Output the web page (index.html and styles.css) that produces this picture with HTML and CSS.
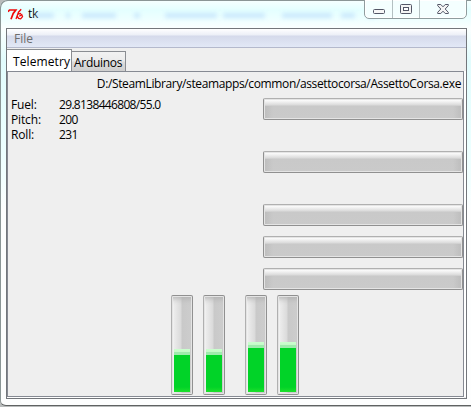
FILE: index.html
```html
<!DOCTYPE html>
<html lang="en">
<head>
<meta charset="utf-8">
<title>tk</title>
<link rel="stylesheet" href="styles.css">
</head>
<body>
<div class="window">
  <header class="titlebar">
    <div class="ghost" aria-hidden="true"><i class="g1"></i><i class="g2"></i><i class="g3"></i><i class="g4"></i><i class="g5"></i><i class="g6"></i><i class="g7"></i><i class="g8"></i><i class="g9"></i></div>
    <svg class="logo" width="16" height="14" viewBox="0 0 16 14" fill="none" stroke="#f00808" stroke-width="1.7"><path d="M0 3.8 1.5 2H7.8L5.2 5.5 3 11.2"/><path d="M13.2 1.2 10.5 4.2 8 11M10 6.2l3-.9M9 7.6 10.5 10.4l2.2.4 1.8-2.2-.8-2-2.4 1.6" stroke-width="1.3"/></svg>
    <span class="title">tk</span>
    <div class="controls">
      <span class="min"><svg width="12" height="5"><rect x=".5" y=".5" width="11" height="4" rx="1" fill="#f7f7f7" stroke="#535666"/></svg></span>
      <span class="max"><svg width="12" height="10"><rect x=".5" y=".5" width="11" height="9" rx="1" fill="#f4f4f4" stroke="#535666"/><rect x="3.5" y="3.5" width="5" height="3" fill="#fff" stroke="#535666"/></svg></span>
      <span class="close"><svg width="12" height="10" viewBox="0 0 12 10"><path d="M.7.5h3.1L6 2.8 8.2.5h3.1v1.2L8.2 5l3.1 3.3v1.2H8.2L6 7.2 3.8 9.5H.7V8.3L3.8 5 .7 1.7z" fill="#f4f4f4" stroke="#535666"/></svg></span>
    </div>
  </header>
  <main class="client">
    <nav class="menu"><span>File</span></nav>
    <div class="tabs"><span class="tab active">Telemetry</span><span class="tab">Arduinos</span></div>
    <section class="panel">
      <p class="path">D:/SteamLibrary/steamapps/common/assettocorsa/AssettoCorsa.exe</p>
      <div class="readings">
        <dl class="values">
          <dt>Fuel:</dt><dd>29.8138446808/55.0</dd>
          <dt>Pitch:</dt><dd>200</dd>
          <dt>Roll:</dt><dd>231</dd>
        </dl>
        <div class="bars">
          <div class="bar wide"></div><div class="bar wide"></div><div class="bar"></div><div class="bar"></div><div class="bar"></div>
        </div>
      </div>
      <div class="gauges">
        <div class="gauge"><div class="fill" style="height:43px"></div></div>
        <div class="gauge pair-end"><div class="fill" style="height:43px"></div></div>
        <div class="gauge"><div class="fill" style="height:50px"></div></div>
        <div class="gauge"><div class="fill" style="height:50px"></div></div>
      </div>
    </section>
  </main>
</div>
</body>
</html>
```
FILE: styles.css
```css
* { box-sizing: border-box; }
body {
  margin: 0;
  width: 471px;
  height: 407px;
  overflow: hidden;
  background: #b9bcbc;
  font: 12px/15px "Open Sans", "Noto Sans", sans-serif;
  color: #000;
}
p, dl, dd { margin: 0; }
span, p, dt, dd { white-space: nowrap; }
.window {
  width: 473px;
  height: 406px;
  padding: 0 7px 0 6px;
  border-bottom: 1px solid #5f6262;
  border-radius: 7px 0 0 6px;
  background: linear-gradient(#f7ffff 0, #e4ffff 10px, #efffff 20px, #fbffff 28px, #e2fcfd 60px, #eaffff 130px, #f2ffff 180px, #fdfefe 210px);
  box-shadow: inset 1px 1px #8b9696;
}
.titlebar {
  position: relative;
  display: flex;
  height: 28px;
}
.logo { margin: 8px 0 0 2px; }
.title { margin: 6px 0 0 4px; letter-spacing: -.2px; }
.ghost i {
  position: absolute;
  top: 13px;
  height: 5px;
  background: #acd3fa;
  opacity: .5;
  filter: blur(2px);
}
.g1 { left: 28px; width: 20px; }
.g2 { left: 60px; width: 4px; }
.g3 { left: 76px; width: 34px; }
.g4 { left: 128px; width: 6px; }
.g5 { left: 159px; width: 52px; }
.g6 { left: 217px; width: 42px; }
.g7 { left: 276px; width: 50px; }
.g8 { left: 335px; width: 14px; }
.g9 { left: 362px; width: 7px; }
.controls {
  position: absolute;
  left: 358px;
  top: -1px;
  display: flex;
  width: 103px;
  height: 20px;
  border: 1px solid #8f9c9e;
  border-radius: 0 0 5px 5px;
  background: #f4ffff;
  box-shadow: inset 0 0 0 1px #fff;
}
.controls span {
  display: flex;
  justify-content: center;
  height: 18px;
  padding-top: 4px;
}
.controls .min { width: 28px; padding-top: 9px; border-right: 1px solid #b4c0c2; }
.controls .max { width: 27px; border-right: 1px solid #b4c0c2; }
.controls .close { width: 46px; }
.client {
  width: 461px;
  height: 371px;
  border: 1px solid #73767b;
  background: #efefef;
}
.menu {
  height: 19px;
  padding: 2px 0 0 7px;
  background: linear-gradient(#fff 0, #eceff7 6px, #d5daeb 7px, #e2e8f6 18px);
  border-bottom: 1px solid #b4b9cc;
  color: #6d6d6d;
}
.tabs {
  display: flex;
  align-items: flex-end;
  height: 23px;
  padding-top: 1px;
}
.tab {
  width: 54px;
  height: 20px;
  padding: 3px 0 0 2px;
  border: 1px solid #8a8d92;
  border-width: 1px 1px 0 0;
  background: linear-gradient(#f2f2f2 0, #ebebeb 9px, #dcdcdc 10px, #cfcfcf);
  letter-spacing: -.3px;
}
.tab.active {
  width: 65px;
  height: 22px;
  padding: 4px 0 0 6px;
  background: #fff;
  letter-spacing: .1px;
}
.panel {
  width: 457px;
  height: 326px;
  border: 1px solid #868a93;
  box-shadow: 0 1px #fff, 2px 0 #fff;
}
.path { margin: 4px 0 0; padding-right: 2px; text-align: right; letter-spacing: -.37px; }
.readings { display: flex; justify-content: space-between; height: 204px; }
.values {
  display: grid;
  grid-template: repeat(3, 15px) / 48px auto;
  margin: 6px 0 0 3px;
  height: 45px;
}
.values dt { letter-spacing: -.15px; }
.values dd { letter-spacing: -.67px; }
.bars { padding-top: 7px; }
.bar {
  width: 200px;
  height: 22px;
  margin-bottom: 10px;
  border: 1px solid #909090;
  border-top-color: #b0b0b0;
  border-radius: 2px;
  background:
    linear-gradient(90deg, #aaa6 0, #aaa0 9px, #aaa0 189px, #aaa6 198px) 0 7px no-repeat,
    linear-gradient(#fff 0, #f6f6f6 2px, #dadada 6px, #c9c9c9 7px, #cacaca);
  box-shadow: inset 0 0 0 1px #e4e4e4;
}
.bar.wide { margin-bottom: 31px; }
.gauges { display: flex; margin: 0 0 0 163px; gap: 10px; }
.gauge {
  display: flex;
  align-items: flex-end;
  width: 22px;
  height: 100px;
  padding: 2px;
  border: 1px solid #909090;
  border-left-color: #b0b0b0;
  border-radius: 2px;
  background: linear-gradient(90deg, #fff 0, #ececec 2px, #dadada 9px, #c9c9c9 10px, #cdcdcd);
  box-shadow: inset 0 0 0 1px #e4e4e4, inset 0 7px 6px -5px #aaa;
}
.pair-end { margin-right: 10px; }
.fill {
  width: 16px;
  background: linear-gradient(#cbffce 0, #c4fac8 3px, #9eebac 3px, #9eebac 6px, #01d328 6px, #01d328 calc(100% - 5px), #1de02b);
}
```
